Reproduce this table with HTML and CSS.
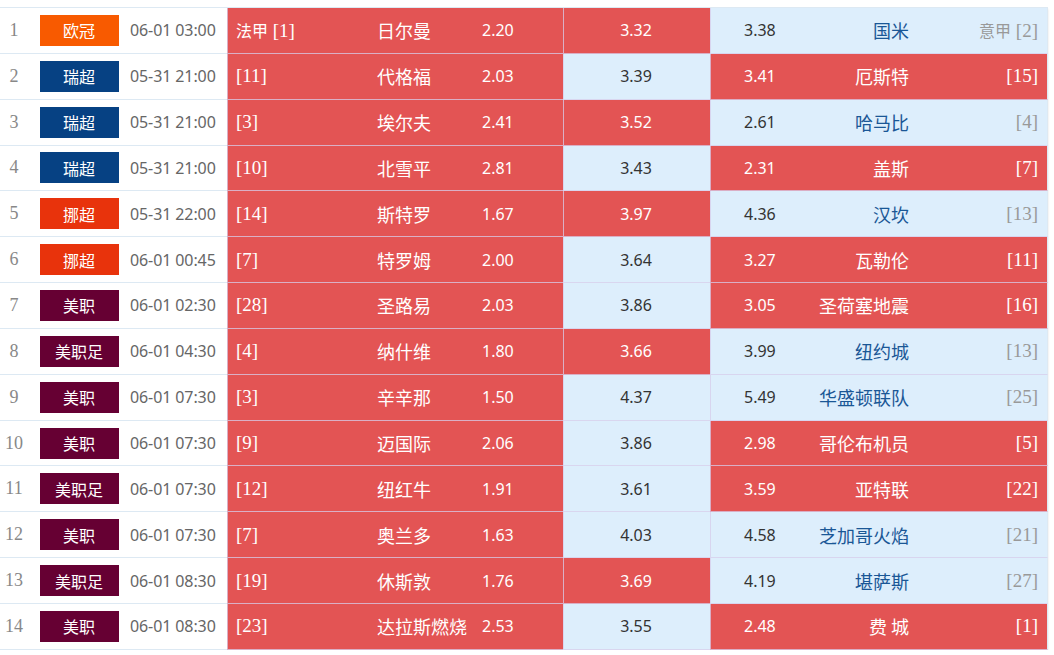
FILE: index.html
```html
<!DOCTYPE html>
<html lang="zh">
<head>
<meta charset="utf-8">
<link rel="stylesheet" href="styles.css">
</head>
<body>
<div class="table">
  <div class="row"><div class="c-no">1</div><div class="c-lg"><span class="badge b-ucl">欧冠</span></div><div class="c-tm">06-01 03:00</div><div class="home red"><span class="rk"><span class="lg">法甲</span> [1]</span><span class="nm">日尔曼</span><span class="od">2.20</span></div><div class="draw red">3.32</div><div class="away lt"><span class="od">3.38</span><span class="nm">国米</span><span class="rk"><span class="lg">意甲</span> [2]</span></div></div>
  <div class="row"><div class="c-no">2</div><div class="c-lg"><span class="badge b-swe">瑞超</span></div><div class="c-tm">05-31 21:00</div><div class="home red"><span class="rk">[11]</span><span class="nm">代格福</span><span class="od">2.03</span></div><div class="draw lt">3.39</div><div class="away red"><span class="od">3.41</span><span class="nm">厄斯特</span><span class="rk">[15]</span></div></div>
  <div class="row"><div class="c-no">3</div><div class="c-lg"><span class="badge b-swe">瑞超</span></div><div class="c-tm">05-31 21:00</div><div class="home red"><span class="rk">[3]</span><span class="nm">埃尔夫</span><span class="od">2.41</span></div><div class="draw red">3.52</div><div class="away lt"><span class="od">2.61</span><span class="nm">哈马比</span><span class="rk">[4]</span></div></div>
  <div class="row"><div class="c-no">4</div><div class="c-lg"><span class="badge b-swe">瑞超</span></div><div class="c-tm">05-31 21:00</div><div class="home red"><span class="rk">[10]</span><span class="nm">北雪平</span><span class="od">2.81</span></div><div class="draw lt">3.43</div><div class="away red"><span class="od">2.31</span><span class="nm">盖斯</span><span class="rk">[7]</span></div></div>
  <div class="row"><div class="c-no">5</div><div class="c-lg"><span class="badge b-nor">挪超</span></div><div class="c-tm">05-31 22:00</div><div class="home red"><span class="rk">[14]</span><span class="nm">斯特罗</span><span class="od">1.67</span></div><div class="draw red">3.97</div><div class="away lt"><span class="od">4.36</span><span class="nm">汉坎</span><span class="rk">[13]</span></div></div>
  <div class="row"><div class="c-no">6</div><div class="c-lg"><span class="badge b-nor">挪超</span></div><div class="c-tm">06-01 00:45</div><div class="home red"><span class="rk">[7]</span><span class="nm">特罗姆</span><span class="od">2.00</span></div><div class="draw lt">3.64</div><div class="away red"><span class="od">3.27</span><span class="nm">瓦勒伦</span><span class="rk">[11]</span></div></div>
  <div class="row"><div class="c-no">7</div><div class="c-lg"><span class="badge b-mls">美职</span></div><div class="c-tm">06-01 02:30</div><div class="home red"><span class="rk">[28]</span><span class="nm">圣路易</span><span class="od">2.03</span></div><div class="draw lt">3.86</div><div class="away red"><span class="od">3.05</span><span class="nm">圣荷塞地震</span><span class="rk">[16]</span></div></div>
  <div class="row"><div class="c-no">8</div><div class="c-lg"><span class="badge b-mls">美职足</span></div><div class="c-tm">06-01 04:30</div><div class="home red"><span class="rk">[4]</span><span class="nm">纳什维</span><span class="od">1.80</span></div><div class="draw red">3.66</div><div class="away lt"><span class="od">3.99</span><span class="nm">纽约城</span><span class="rk">[13]</span></div></div>
  <div class="row"><div class="c-no">9</div><div class="c-lg"><span class="badge b-mls">美职</span></div><div class="c-tm">06-01 07:30</div><div class="home red"><span class="rk">[3]</span><span class="nm">辛辛那</span><span class="od">1.50</span></div><div class="draw lt">4.37</div><div class="away lt"><span class="od">5.49</span><span class="nm">华盛顿联队</span><span class="rk">[25]</span></div></div>
  <div class="row"><div class="c-no">10</div><div class="c-lg"><span class="badge b-mls">美职</span></div><div class="c-tm">06-01 07:30</div><div class="home red"><span class="rk">[9]</span><span class="nm">迈国际</span><span class="od">2.06</span></div><div class="draw lt">3.86</div><div class="away red"><span class="od">2.98</span><span class="nm">哥伦布机员</span><span class="rk">[5]</span></div></div>
  <div class="row"><div class="c-no">11</div><div class="c-lg"><span class="badge b-mls">美职足</span></div><div class="c-tm">06-01 07:30</div><div class="home red"><span class="rk">[12]</span><span class="nm">纽红牛</span><span class="od">1.91</span></div><div class="draw lt">3.61</div><div class="away red"><span class="od">3.59</span><span class="nm">亚特联</span><span class="rk">[22]</span></div></div>
  <div class="row"><div class="c-no">12</div><div class="c-lg"><span class="badge b-mls">美职</span></div><div class="c-tm">06-01 07:30</div><div class="home red"><span class="rk">[7]</span><span class="nm">奥兰多</span><span class="od">1.63</span></div><div class="draw lt">4.03</div><div class="away lt"><span class="od">4.58</span><span class="nm">芝加哥火焰</span><span class="rk">[21]</span></div></div>
  <div class="row"><div class="c-no">13</div><div class="c-lg"><span class="badge b-mls">美职足</span></div><div class="c-tm">06-01 08:30</div><div class="home red"><span class="rk">[19]</span><span class="nm">休斯敦</span><span class="od">1.76</span></div><div class="draw red">3.69</div><div class="away lt"><span class="od">4.19</span><span class="nm">堪萨斯</span><span class="rk">[27]</span></div></div>
  <div class="row"><div class="c-no">14</div><div class="c-lg"><span class="badge b-mls">美职</span></div><div class="c-tm">06-01 08:30</div><div class="home red"><span class="rk">[23]</span><span class="nm">达拉斯燃烧</span><span class="od">2.53</span></div><div class="draw lt">3.55</div><div class="away red"><span class="od">2.48</span><span class="nm">费 城</span><span class="rk">[1]</span></div></div>
</div>
</body>
</html>
```
FILE: styles.css
```css
html, body {
  margin: 0;
  padding: 0;
  background: #fff;
}
body {
  font-family: "Noto Sans", "Noto Sans CJK SC", sans-serif;
  font-size: 16px;
  padding-top: 7px;
}
.table {
  width: 1048px;
  border-top: 1px solid #dde9f3;
  box-shadow: 0 2px 2px rgba(0,0,0,0.12);
}
.row {
  display: grid;
  grid-template-columns: 27px 100px 100px 336px 147px 338px;
  height: 45.85px;
  box-sizing: border-box;
}
.row > div {
  display: flex;
  align-items: center;
  box-sizing: border-box;
  border-bottom: 1px solid #dde9f3;
}
.c-no {
  justify-content: center;
  font-family: "Liberation Serif", serif;
  font-size: 18px;
  color: #888;
  padding-left: 1px;
}
.c-lg {
  justify-content: center;
  padding-left: 4px;
}
.badge {
  width: 79px;
  height: 31px;
  display: flex;
  align-items: center;
  justify-content: center;
  color: #fff;
  font-family: "Noto Sans CJK SC", sans-serif;
  font-size: 16px;
}
.b-ucl { background: #f85a00; }
.b-swe { background: #064183; }
.b-nor { background: #e8330c; }
.b-mls { background: #660033; }
.c-tm {
  color: #666;
  font-size: 16px;
  padding-left: 3px;
  letter-spacing: -0.1px;
}
.red {
  background: #e35454;
  color: #fff;
}
.lt {
  background: #ddeefc;
  color: #333;
}
.row > .home, .row > .draw, .row > .away {
  border-bottom: 1px solid rgba(215, 205, 235, 0.75);
  border-left: 1px solid rgba(215, 205, 235, 0.75);
}
.row > .away {
  border-right: 1px solid #dde9f3;
}
.home {
  padding-left: 8px;
}
.home .rk {
  width: 141px;
  flex: none;
}
.home .nm {
  width: 105px;
  flex: none;
}
.rk {
  font-family: "Liberation Serif", serif;
  font-size: 19px;
}
.lg {
  font-family: "Noto Sans CJK SC", sans-serif;
  font-size: 16px;
}
.nm {
  font-family: "Noto Sans CJK SC", sans-serif;
  font-size: 18px;
}
.od {
  font-size: 16px;
}
.draw {
  justify-content: center;
  padding-right: 2px;
}
.away {
  padding-left: 33px;
  padding-right: 9px;
}
.away .od {
  width: 60px;
  flex: none;
}
.away .nm {
  width: 105px;
  flex: none;
  text-align: right;
}
.away .rk {
  flex: 1;
  text-align: right;
}
.away.lt .nm {
  color: #1a5796;
}
.away.lt .rk {
  color: #999;
}
```
